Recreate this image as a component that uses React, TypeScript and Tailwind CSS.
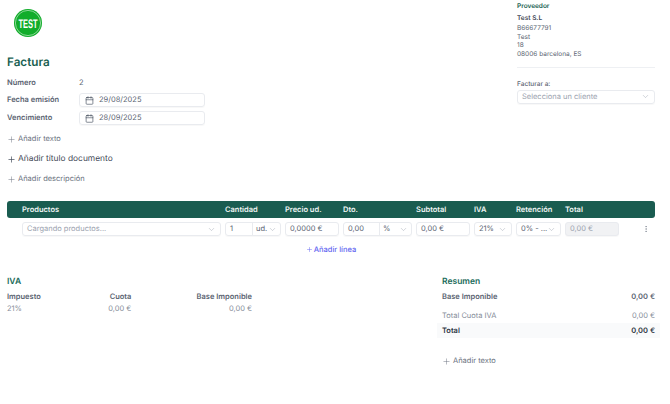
import { Calendar, ChevronDown, MoreVertical, Plus } from "lucide-react";

const box = "flex items-center border border-[#e9ebef] rounded-[3px] shadow-[0_1px_1px_rgba(0,0,0,0.03)] h-[14px] text-[7.5px] text-[#5b6472]";
const cols = "grid grid-cols-[199px_56px_54px_69px_54px_38px_45px_54px] gap-x-[4px]";

function Chev({ className = "" }: { className?: string }) {
  return <ChevronDown size={9} strokeWidth={1.2} className={"text-[#9ca3af] shrink-0 " + className} />;
}

function Add({ label, size = "small", className = "" }: { label: string; size?: "small" | "big"; className?: string }) {
  const big = size === "big";
  return (
    <div className={"flex items-center gap-[2px] " + (big ? "text-[8.4px] text-[#3f4856] " : "text-[7.5px] text-[#6b7280] ") + className}>
      <Plus size={9} strokeWidth={big ? 1.8 : 1.3} />
      <span>{label}</span>
    </div>
  );
}

function DateField({ value }: { value: string }) {
  return (
    <div className={box + " w-[126px] pl-[5px] gap-[5px]"}>
      <Calendar size={9} strokeWidth={1.6} className="text-[#374151]" />
      <span>{value}</span>
    </div>
  );
}

export default function App() {
  return (
    <div className="w-[670px] h-[404px] overflow-hidden bg-white font-['Inter',sans-serif] antialiased [text-rendering:geometricPrecision] pl-[7px] pr-[15px] pt-[2px]">
      <div className="flex justify-between h-[195px]">
        <div className="flex flex-col">
          <div className="h-[38px] pl-[7px] pt-[7px]">
            <svg width="28" height="28" viewBox="0 0 28 28" className="overflow-visible">
              <circle cx="14" cy="14" r="14" fill="#12ad2b" />
              <circle cx="14" cy="14" r="12.6" fill="none" stroke="#fff" strokeWidth="0.5" />
              <g transform="translate(14 18.5) scale(0.6 1)">
                <text x="0" y="0" textAnchor="middle" fontFamily="Liberation Sans" fontWeight="700" fontSize="12.5" fill="#fff">TEST</text>
              </g>
            </svg>
          </div>
          <h1 className="mt-[14px] text-[11.7px] leading-[16px] font-semibold text-[#1a5f52]">Factura</h1>
          <div className="mt-[6px] flex items-center h-[14px] text-[7.5px]">
            <span className="w-[72px] font-semibold text-[#5b6472]">Número</span>
            <span className="text-[#5b6472]">2</span>
          </div>
          <div className="mt-[3px] flex items-center text-[7.5px]">
            <span className="w-[72px] font-semibold text-[#5b6472]">Fecha emisión</span>
            <DateField value="29/08/2025" />
          </div>
          <div className="mt-[4px] flex items-center text-[7.5px]">
            <span className="w-[72px] font-semibold text-[#5b6472]">Vencimiento</span>
            <DateField value="28/09/2025" />
          </div>
          <Add label="Añadir texto" className="mt-[8px] h-[12px]" />
          <Add label="Añadir título documento" size="big" className="mt-[8px] h-[12px]" />
          <Add label="Añadir descripción" className="mt-[8px] h-[12px]" />
        </div>
        <div className="w-[138px] flex flex-col text-[6.5px] text-[#5b6472]">
          <div className="h-[9px] leading-[9px] font-semibold text-[#1a5f52]">Proveedor</div>
          <div className="mt-[2px] h-[10px] leading-[10px] font-semibold text-[#3f4856]">Test S.L</div>
          <div className="mt-[1px] leading-[8.7px]">B66677791</div>
          <div className="leading-[8.7px]">Test</div>
          <div className="leading-[8.7px]">18</div>
          <div className="leading-[8.7px]">08006 barcelona, ES</div>
          <div className="mt-[8px] border-t border-[#eef0f3]" />
          <div className="mt-[11px] h-[10px] leading-[10px] font-medium text-[#5b6472]">Facturar a:</div>
          <div className={box + " justify-between px-[4px] mt-[1px] !text-[#9ca3af]"}>
            <span>Selecciona un cliente</span>
            <Chev />
          </div>
        </div>
      </div>

      <div className="mt-[4px]">
        <div className={cols + " h-[17px] items-center bg-[#1a5c50] rounded-[3px] pl-[15px] text-[7.5px] font-semibold text-[#f0f5f4]"}>
          <span>Productos</span>
          <span>Cantidad</span>
          <span>Precio ud.</span>
          <span>Dto.</span>
          <span>Subtotal</span>
          <span>IVA</span>
          <span>Retención</span>
          <span>Total</span>
        </div>
        <div className="relative">
          <div className={cols + " mt-[4px] pl-[15px]"}>
            <div className={box + " justify-between px-[4px] !text-[#9ca3af]"}>
              <span>Cargando productos...</span>
              <Chev />
            </div>
            <div className={box}>
              <span className="w-[27px] pl-[4px] h-full flex items-center border-r border-[#e9ebef]">1</span>
              <span className="flex-1 flex items-center justify-between px-[3px]">ud.<Chev /></span>
            </div>
            <div className={box + " pl-[4px]"}>0,0000 €</div>
            <div className={box}>
              <span className="w-[36px] pl-[4px] h-full flex items-center border-r border-[#e9ebef]">0,00</span>
              <span className="flex-1 flex items-center justify-between px-[3px]">%<Chev /></span>
            </div>
            <div className={box + " pl-[4px]"}>0,00 €</div>
            <div className={box + " justify-between px-[4px]"}>21%<Chev /></div>
            <div className={box + " justify-between px-[4px]"}><span className="whitespace-nowrap">0% - ...</span><Chev /></div>
            <div className={box + " pl-[4px] bg-[#f1f2f4] !text-[#9ca3af]"}>0,00 €</div>
          </div>
          <MoreVertical size={8} strokeWidth={1.5} className="absolute right-[5px] top-[3px] text-[#6b7280]" />
        </div>
        <div className="mt-[8px] h-[11px] flex items-center justify-center gap-[1px] text-[7.5px] font-medium text-[#6366f1]">
          <Plus size={7} strokeWidth={1.6} />
          <span>Añadir línea</span>
        </div>
      </div>

      <div className="mt-[21px] flex justify-between">
        <div className="w-[245px]">
          <h2 className="text-[8.5px] leading-[12px] font-semibold text-[#1a6b5a]">IVA</h2>
          <div className="mt-[3px] grid grid-cols-[1fr_1fr_1fr] text-[7.5px] leading-[12px]">
            <span className="font-semibold text-[#5b6472]">Impuesto</span>
            <span className="font-semibold text-[#5b6472] text-right pr-[39px]">Cuota</span>
            <span className="font-semibold text-[#5b6472] text-right">Base Imponible</span>
            <span className="text-[#868d99]">21%</span>
            <span className="text-[#868d99] text-right pr-[39px]">0,00 €</span>
            <span className="text-[#868d99] text-right">0,00 €</span>
          </div>
        </div>
        <div className="w-[213px] text-[7.5px]">
          <h2 className="text-[8.5px] leading-[12px] font-semibold text-[#1a6b5a]">Resumen</h2>
          <div className="mt-[2px] h-[14px] flex items-center justify-between font-semibold text-[#5b6472]">
            <span>Base Imponible</span><span>0,00 €</span>
          </div>
          <div className="mt-[5px] h-[14px] flex items-center justify-between text-[#868d99]">
            <span>Total Cuota IVA</span><span>0,00 €</span>
          </div>
          <div className="-mx-[5px] px-[5px] h-[15px] bg-[#f9fafb] flex items-center justify-between font-semibold text-[#2f3744]">
            <span>Total</span><span>0,00 €</span>
          </div>
          <Add label="Añadir texto" className="mt-[17px] h-[12px]" />
        </div>
      </div>
    </div>
  );
}
